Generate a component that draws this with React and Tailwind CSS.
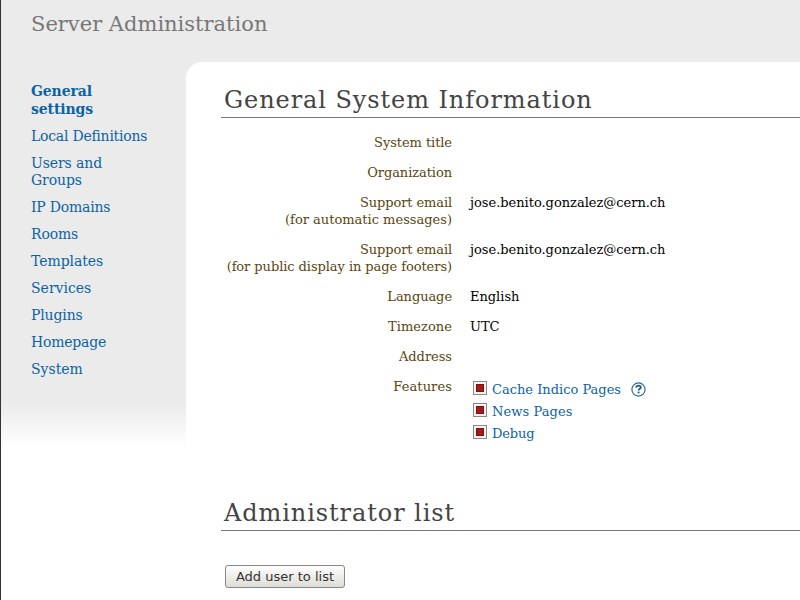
const menu = [
  { lines: ['Local Definitions'], tracking: 'tracking-[-0.24px]' },
  { lines: ['Users and', 'Groups'], tracking: 'tracking-[-0.1px]' },
  { lines: ['IP Domains'], tracking: 'tracking-[-0.22px]' },
  { lines: ['Rooms'], tracking: 'tracking-[-0.15px]' },
  { lines: ['Templates'], tracking: 'tracking-[-0.05px]' },
  { lines: ['Services'], tracking: 'tracking-normal' },
  { lines: ['Plugins'], tracking: 'tracking-[-0.14px]' },
  { lines: ['Homepage'], tracking: 'tracking-[-0.22px]' },
  { lines: ['System'], tracking: 'tracking-normal' },
];

const rows = [
  { label: ['System title'], tracking: 'tracking-[-0.07px]' },
  { label: ['Organization'], tracking: 'tracking-[-0.07px]' },
  {
    label: ['Support email', '(for automatic messages)'],
    tracking: 'tracking-[-0.1px] [&>div:last-child]:tracking-normal',
    value: 'jose.benito.gonzalez@cern.ch',
  },
  {
    label: ['Support email', '(for public display in page footers)'],
    tracking: 'tracking-[-0.1px] [&>div:last-child]:tracking-[-0.07px]',
    value: 'jose.benito.gonzalez@cern.ch',
  },
  { label: ['Language'], tracking: 'tracking-[-0.07px]', value: 'English' },
  { label: ['Timezone'], tracking: 'tracking-[0.04px]', value: 'UTC' },
  { label: ['Address'], tracking: 'tracking-[-0.04px]' },
];

const features = [
  { name: 'Cache Indico Pages', tracking: 'tracking-normal', help: true },
  { name: 'News Pages', tracking: 'tracking-[0.1px]' },
  { name: 'Debug', tracking: 'tracking-[-0.15px]' },
];

function HelpIcon() {
  return (
    <svg className="ml-[10px] h-[15px] w-[15px]" viewBox="0 0 15 15" fill="none">
      <circle cx="7.5" cy="7.5" r="6.6" stroke="#2d6799" strokeWidth="1.15" />
      <path d="M5.2 5.6C5.3 4.2 6.2 3.6 7.5 3.6S9.8 4.2 9.8 5.4C9.8 6.9 7.6 6.8 7.6 8.6" stroke="#205c91" strokeWidth="1.8" />
      <path d="M6.6 9.6h1.9v1.8H6.6z" fill="#205c91" />
    </svg>
  );
}

function Heading({ children }) {
  return (
    <h2 className="h-[36px] border-b border-[#777] pl-[3px] text-[24px] leading-[36px] tracking-[0.92px] whitespace-nowrap text-[#444]">
      {children}
    </h2>
  );
}

export default function App() {
  return (
    <div className="flex h-[600px] w-[800px] flex-col overflow-hidden border-l border-[#333] bg-white font-['DejaVu_Serif',serif]">
      <header className="h-[62px] shrink-0 bg-[#ebebeb] pt-[9px] pl-[30px]">
        <h1 className="text-[21px] leading-[30px] whitespace-nowrap text-[#777]">Server Administration</h1>
      </header>
      <div className="flex min-h-0 flex-1 bg-[linear-gradient(to_bottom,#ebebeb_0px,#ebebeb_340px,#ffffff_386px)]">
        <nav className="w-[185px] shrink-0 pt-[20px] pl-[30px] text-[14px] leading-[17px] text-[#0b63a5]">
          <a className="mb-[10px] block leading-[18px] font-bold tracking-[-0.12px]">
            General
            <br />
            settings
          </a>
          {menu.map(({ lines, tracking }) => (
            <a key={lines[0]} className={`mb-[10px] block whitespace-nowrap ${tracking}`}>
              {lines.map((line) => (
                <span key={line} className="block">{line}</span>
              ))}
            </a>
          ))}
        </nav>
        <main className="min-w-0 flex-1 rounded-tl-[16px] bg-white pt-[20px] pl-[35px]">
          <Heading>General System Information</Heading>
          <div className="mt-[16px] text-[13px] leading-[17px]">
            {rows.map(({ label, value, tracking }, i) => (
              <div key={i} className="mb-[13px] flex">
                <div className={`w-[231px] shrink-0 text-right whitespace-nowrap text-[#5a4510] ${tracking}`}>
                  {label.map((line) => (
                    <div key={line}>{line}</div>
                  ))}
                </div>
                <div className="ml-[18px] tracking-[-0.02px] text-black">{value}</div>
              </div>
            ))}
            <div className="flex">
              <div className="w-[231px] shrink-0 text-right tracking-[0.1px] text-[#5a4510]">Features</div>
              <ul className="ml-[21px] text-[#0b63a5]">
                {features.map(({ name, tracking, help }) => (
                  <li key={name} className="flex h-[22px] items-center">
                    <span className="mr-[5px] mb-[2px] flex h-[14px] w-[14px] items-center justify-center border border-[#888] bg-[#f4f4f4]">
                      <span className="h-[8px] w-[8px] border border-[#7d1111] bg-[#a31b1b]" />
                    </span>
                    <span className={tracking}>{name}</span>
                    {help && <HelpIcon />}
                  </li>
                ))}
              </ul>
            </div>
          </div>
          <div className="mt-[51px]">
            <Heading>Administrator list</Heading>
          </div>
          <button className="mt-[34px] ml-[4px] block h-[23px] w-[120px] rounded-[3px] border border-[#888] bg-linear-to-b from-white to-[#dfdcd6] font-['DejaVu_Sans',sans-serif] text-[13px] leading-[21px] whitespace-nowrap text-[#333]">
            Add user to list
          </button>
        </main>
      </div>
    </div>
  );
}
